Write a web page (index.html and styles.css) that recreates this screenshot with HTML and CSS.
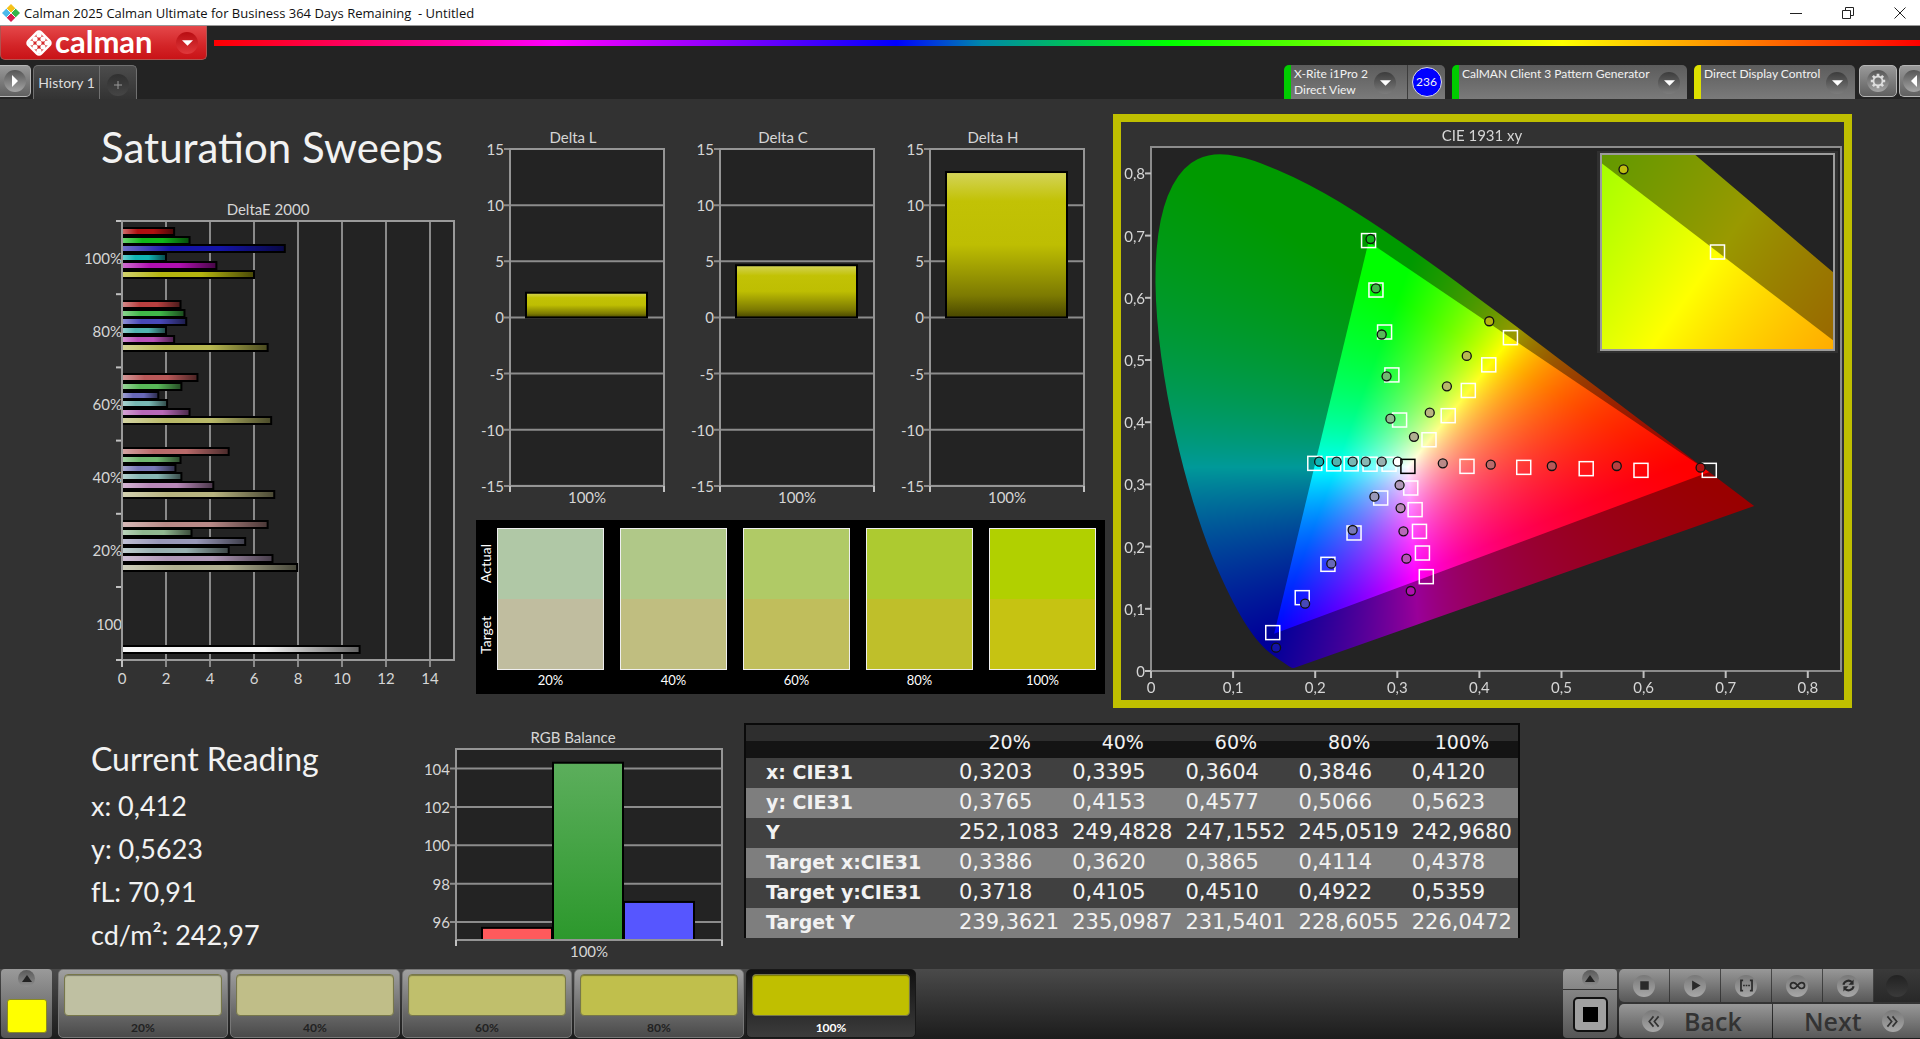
FILE: index.html
```html
<!DOCTYPE html>
<html lang="en">
<head>
<meta charset="utf-8">
<title>Calman 2025 - Untitled</title>
<link rel="stylesheet" href="styles.css">
</head>
<body>
<header class="titlebar">
  <svg class="app-icon" viewBox="0 0 20 20" aria-hidden="true">
    <path d="M10 0l5 5-5 5-5-5z" fill="#f5c21b"/>
    <path d="M5 5l5 5-5 5-5-5z" fill="#4db8ea"/>
    <path d="M15 5l5 5-5 5-5-5z" fill="#35b44a"/>
    <path d="M10 10l5 5-5 5-5-5z" fill="#d81e4e"/>
    <path d="M5 5l5 5M15 5L5 15M10 10l5 5" stroke="#fff" stroke-width="1"/>
  </svg>
  <span class="window-title">Calman 2025 Calman Ultimate for Business 364 Days Remaining&nbsp; - Untitled</span>
  <div class="window-buttons">
    <button type="button" aria-label="Minimize"><svg viewBox="0 0 14 14"><path d="M1 7.500h12"/></svg></button>
    <button type="button" aria-label="Restore"><svg viewBox="0 0 14 14"><path d="M1.500 4.500h8v8h-8zM4.500 4.500v-3h8v8h-3"/></svg></button>
    <button type="button" aria-label="Close"><svg viewBox="0 0 14 14"><path d="M1.500 1.500l11 11M12.500 1.500l-11 11"/></svg></button>
  </div>
</header>

<div class="brandbar">
  <button type="button" class="brand">
    <svg class="brand-icon" viewBox="0 0 28 28" aria-hidden="true">
      <rect x="5" y="5" width="18" height="18" rx="3" transform="rotate(45 14 14)" fill="none" stroke="#fff" stroke-width="2.500"/>
      <g fill="#fff">
        <circle cx="14" cy="6" r="2.600"/><circle cx="10" cy="10" r="2.600"/><circle cx="18" cy="10" r="2.600"/>
        <circle cx="6" cy="14" r="2.600"/><circle cx="14" cy="14" r="2.600"/><circle cx="22" cy="14" r="2.600"/>
        <circle cx="10" cy="18" r="2.600"/><circle cx="18" cy="18" r="2.600"/><circle cx="14" cy="22" r="2.600"/>
      </g>
    </svg>
    <span class="brand-name">calman</span>
    <span class="knob knob-red"><svg viewBox="0 0 12 6"><path d="M0 0h12l-6 6z" fill="#fff"/></svg></span>
  </button>
  <div class="rainbow"></div>
</div>

<nav class="toolbar">
  <button type="button" class="square-btn edge-left" aria-label="Expand panel"><span class="knob knob-gray"><svg class="tri-side" viewBox="0 0 6 12"><path d="M0 0v12l6-6z" fill="#fff"/></svg></span></button>
  <div class="tabs">
    <button type="button" class="tab">History 1</button>
    <button type="button" class="tab-add" aria-label="Add tab"><span class="knob knob-dark"><svg class="plus" viewBox="0 0 8 8"><path d="M4 0v8M0 4h8" stroke="#999"/></svg></span></button>
  </div>
  <div class="devices">
    <div class="device device-meter">
      <button type="button" class="device-main"><span>X-Rite i1Pro 2<br>Direct View</span><span class="knob knob-shade"><svg viewBox="0 0 12 6"><path d="M0 0h12l-6 6z" fill="#fff"/></svg></span></button>
      <div class="badge-cell"><span class="badge">236</span></div>
    </div>
    <div class="device device-source">
      <button type="button" class="device-main"><span>CalMAN Client 3 Pattern Generator</span><span class="knob knob-shade"><svg viewBox="0 0 12 6"><path d="M0 0h12l-6 6z" fill="#fff"/></svg></span></button>
    </div>
    <div class="device device-display">
      <button type="button" class="device-main"><span>Direct Display Control</span><span class="knob knob-shade"><svg viewBox="0 0 12 6"><path d="M0 0h12l-6 6z" fill="#fff"/></svg></span></button>
    </div>
    <button type="button" class="square-btn" aria-label="Settings"><span class="knob knob-gray"><svg class="gear" viewBox="0 0 20 20"><circle cx="10" cy="10" r="5" fill="none" stroke="#ddd" stroke-width="2"/><g stroke="#ddd" stroke-width="3"><path d="M10 2v3M10 15v3M2 10h3M15 10h3M4.300 4.300l2.200 2.200M13.500 13.500l2.200 2.200M4.300 15.700l2.200-2.200M13.500 6.500l2.200-2.200"/></g></svg></span></button>
    <button type="button" class="square-btn edge-right" aria-label="Collapse panel"><span class="knob knob-gray"><svg class="tri-side" viewBox="0 0 6 12"><path d="M6 0v12L0 6z" fill="#fff"/></svg></span></button>
  </div>
</nav>

<main class="workspace">
  <section class="row-top">
    <div class="col-sweeps">
      <h1>Saturation Sweeps</h1>
      <svg class="chart" id="deltae" viewBox="0 0 468 510" role="img" aria-label="DeltaE 2000"></svg>
    </div>
    <div class="col-delta">
      <div class="delta-charts">
        <svg class="chart" id="delta-l" viewBox="0 0 210 384" role="img" aria-label="Delta L"></svg>
        <svg class="chart" id="delta-c" viewBox="0 0 210 384" role="img" aria-label="Delta C"></svg>
        <svg class="chart" id="delta-h" viewBox="0 0 210 384" role="img" aria-label="Delta H"></svg>
      </div>
      <div class="swatches">
        <div class="swatch-side"><span>Actual</span><span>Target</span></div>
        <figure><div class="pair p20"></div><figcaption>20%</figcaption></figure>
        <figure><div class="pair p40"></div><figcaption>40%</figcaption></figure>
        <figure><div class="pair p60"></div><figcaption>60%</figcaption></figure>
        <figure><div class="pair p80"></div><figcaption>80%</figcaption></figure>
        <figure><div class="pair p100"></div><figcaption>100%</figcaption></figure>
      </div>
    </div>
    <div class="cie">
      <canvas id="gamut" width="723" height="578"></canvas>
      <svg class="chart" id="cie" viewBox="0 0 723 578" role="img" aria-label="CIE 1931 xy"></svg>
    </div>
  </section>

  <section class="row-bottom">
    <div class="reading">
      <h2>Current Reading</h2>
      <p>x: 0,412</p>
      <p>y: 0,5623</p>
      <p>fL: 70,91</p>
      <p>cd/m²: 242,97</p>
    </div>
    <svg class="chart" id="rgb" viewBox="0 0 324 240" role="img" aria-label="RGB Balance"></svg>
    <table class="data">
      <thead><tr><th></th><th>20%</th><th>40%</th><th>60%</th><th>80%</th><th>100%</th></tr></thead>
      <tbody>
        <tr><th>x: CIE31</th><td>0,3203</td><td>0,3395</td><td>0,3604</td><td>0,3846</td><td>0,4120</td></tr>
        <tr><th>y: CIE31</th><td>0,3765</td><td>0,4153</td><td>0,4577</td><td>0,5066</td><td>0,5623</td></tr>
        <tr><th>Y</th><td>252,1083</td><td>249,4828</td><td>247,1552</td><td>245,0519</td><td>242,9680</td></tr>
        <tr><th>Target x:CIE31</th><td>0,3386</td><td>0,3620</td><td>0,3865</td><td>0,4114</td><td>0,4378</td></tr>
        <tr><th>Target y:CIE31</th><td>0,3718</td><td>0,4105</td><td>0,4510</td><td>0,4922</td><td>0,5359</td></tr>
        <tr><th>Target Y</th><td>239,3621</td><td>235,0987</td><td>231,5401</td><td>228,6055</td><td>226,0472</td></tr>
      </tbody>
    </table>
  </section>
</main>

<footer class="footer">
  <button type="button" class="current" aria-label="Current pattern">
    <span class="knob-up"><svg viewBox="0 0 10 7"><path d="M5 0l5 7H0z" fill="#222"/></svg></span>
    <span class="current-color"></span>
  </button>
  <div class="patterns">
    <button type="button" class="pattern"><span class="chip c20"></span>20%</button>
    <button type="button" class="pattern"><span class="chip c40"></span>40%</button>
    <button type="button" class="pattern"><span class="chip c60"></span>60%</button>
    <button type="button" class="pattern"><span class="chip c80"></span>80%</button>
    <button type="button" class="pattern selected"><span class="chip c100"></span>100%</button>
  </div>
  <div class="stopper">
    <button type="button" class="stop-up" aria-label="More"><span class="knob-up"><svg viewBox="0 0 10 7"><path d="M5 0l5 7H0z" fill="#222"/></svg></span></button>
    <button type="button" class="stop-main" aria-label="Stop pattern"><span class="stop-frame"><span class="stop-core"></span></span></button>
  </div>
  <div class="transport">
    <div class="transport-row">
      <button type="button" aria-label="Stop"><span class="disc"><svg viewBox="0 0 20 20"><path d="M5 5h10v10H5z" fill="#2a2a2a"/></svg></span></button>
      <button type="button" aria-label="Play"><span class="disc"><svg viewBox="0 0 20 20"><path d="M6 4v12l10-6z" fill="#2a2a2a"/></svg></span></button>
      <button type="button" aria-label="Single step"><span class="disc"><svg viewBox="0 0 20 20"><path d="M6 4H3.500v12H6M14 4h2.500v12H14" fill="none" stroke="#2a2a2a" stroke-width="2"/><path d="M6 9h2v2H6zM9 9h2v2H9zM12 9h2v2h-2z" fill="#2a2a2a"/></svg></span></button>
      <button type="button" aria-label="Continuous"><span class="disc"><svg viewBox="0 0 20 20"><path d="M10 10c-2-3-3.500-3.500-4.800-3.500a3.500 3.500 0 0 0 0 7c1.300 0 2.800-.5 4.800-3.500s3.500-3.500 4.800-3.500a3.500 3.500 0 0 1 0 7c-1.300 0-2.800-.5-4.800-3.500z" fill="none" stroke="#2a2a2a" stroke-width="2"/></svg></span></button>
      <button type="button" aria-label="Refresh"><span class="disc"><svg viewBox="0 0 20 20"><path d="M4 9a6 6 0 0 1 10-3M16 11a6 6 0 0 1-10 3" fill="none" stroke="#2a2a2a" stroke-width="2.500"/><path d="M16 3v6h-6zM4 17v-6h6z" fill="#2a2a2a"/></svg></span></button>
      <div class="transport-rest"><span class="disc disc-dark"></span></div>
    </div>
    <div class="transport-row">
      <button type="button" class="nav-btn"><span class="disc"><svg viewBox="0 0 20 20"><path d="M10 4l-5 6 5 6M16 4l-5 6 5 6" fill="none" stroke="#333" stroke-width="2"/></svg></span>Back</button>
      <button type="button" class="nav-btn next">Next<span class="disc"><svg viewBox="0 0 20 20"><path d="M4 4l5 6-5 6M10 4l5 6-5 6" fill="none" stroke="#333" stroke-width="2"/></svg></span></button>
    </div>
  </div>
</footer>
<script src="charts.js"></script>
</body>
</html>
```
FILE: styles.css
```css
* { box-sizing: border-box; }
html { background: #232323; }
body {
  margin: 0;
  min-height: 100vh;
  display: flex;
  flex-direction: column;
  overflow-x: hidden;
  background: #232323;
  color: #f2f2f2;
  font-family: Lato, "Liberation Sans", sans-serif;
  font-size: 15px;
}
button {
  margin: 0;
  padding: 0;
  border: 0;
  background: none;
  color: inherit;
  font: inherit;
  cursor: pointer;
}
svg { display: block; }

/* window title */
.titlebar {
  display: flex;
  align-items: center;
  height: 26px;
  padding-left: 2px;
  background: #fff;
  border-bottom: 1px solid #999;
  color: #111;
}
.app-icon { width: 18px; height: 18px; margin-right: 4px; }
.window-title { font: 13px/24px "Open Sans", "Noto Sans", sans-serif; white-space: nowrap; }
.window-buttons { display: flex; gap: 12px; margin-left: auto; }
.window-buttons button { display: flex; justify-content: center; width: 40px; }
.window-buttons svg { width: 14px; height: 14px; fill: none; stroke: #222; stroke-width: 1; }

/* brand */
.brandbar { display: flex; align-items: center; gap: 7px; height: 34px; }
.brand {
  display: flex;
  align-items: center;
  width: 207px;
  height: 34px;
  padding: 0 8px 0 24px;
  border: 1px solid #b0524f;
  border-top: 0;
  border-radius: 0 0 5px 5px;
  background: linear-gradient(#e5484a, #d32427 60%, #c91317);
  color: #fff;
}
.brand-icon { width: 28px; height: 28px; margin-right: 2px; }
.brand-name { font-size: 31px; font-weight: 700; line-height: 30px; height: 34px; }
.knob {
  display: flex;
  flex: none;
  align-items: center;
  justify-content: center;
  width: 22px;
  height: 22px;
  border-radius: 50%;
}
.knob svg { width: 11px; height: 6px; }
.knob .tri-side { width: 6px; height: 12px; }
.knob .plus { width: 8px; height: 8px; }
.knob .gear { width: 18px; height: 18px; }
.knob-red { margin-left: auto; background: linear-gradient(#b80d12, #e0383b); }
.knob-gray { background: linear-gradient(#555, #a5a5a5); }
.knob-dark { background: linear-gradient(#303030, #454545); }
.knob-shade { background: linear-gradient(#3c3c3c, #7c7c7c); }
.rainbow {
  flex: 1;
  height: 6px;
  background: linear-gradient(90deg, #f00 0%, #f0a 14%, #f0f 20%, #80f 30%, #00f 40%, #08a 45%, #0f0 56%, #8f0 68%, #ff0 79%, #f80 89%, #f00 100%);
}

/* toolbar */
.toolbar { display: flex; align-items: flex-start; height: 39px; padding-top: 5px; }
.square-btn {
  display: flex;
  flex: none;
  align-items: center;
  justify-content: center;
  width: 38px;
  height: 32px;
  border: 1px solid #b5b5b5;
  border-radius: 5px;
  background: linear-gradient(#999, #606060);
}
.edge-left { width: 31px; border-left: 0; border-radius: 0 5px 5px 0; }
.edge-right { width: 21px; border-right: 0; border-radius: 5px 0 0 5px; justify-content: flex-start; padding-left: 3px; overflow: hidden; }
.tabs {
  display: flex;
  height: 34px;
  margin-left: 2px;
  border: 1px solid #707070;
  border-bottom: 0;
  border-radius: 5px 5px 0 0;
  background: linear-gradient(#4c4c4c, #333);
  color: #ddd;
}
.tab { width: 65px; white-space: nowrap; font-size: 14px; }
.tab-add { display: flex; align-items: center; justify-content: center; width: 37px; padding-top: 4px; border-left: 1px solid #707070; }
.devices { display: flex; gap: 2px; margin-left: auto; }
.device {
  display: flex;
  height: 34px;
  margin-right: 5px;
  border-left: 7px solid #0c0;
  border-radius: 5px 5px 0 0;
  background: linear-gradient(#5c5c5c, #7a7a7a);
  font-size: 12px;
  line-height: 16px;
}
.device-meter { width: 161px; }
.device-source { width: 235px; }
.device-display { width: 161px; margin-right: 2px; border-left-color: #dde000; }
.device-main { display: flex; flex: 1; justify-content: space-between; align-items: flex-start; padding: 1px 7px 0 3px; text-align: left; white-space: nowrap; }
.device-main .knob { margin-top: 6px; }
.device-meter .device-main { padding-right: 11px; }
.badge-cell { display: flex; align-items: center; justify-content: center; width: 38px; border-left: 1px solid #3c3c3c; }
.badge {
  display: flex;
  align-items: center;
  justify-content: center;
  width: 30px;
  height: 30px;
  border: 1px solid #ddd;
  border-radius: 50%;
  background: #00f;
}

/* workspace */
.workspace { flex: 1; background: #323232; }
.row-top { display: grid; grid-template-columns: 468fr 645fr 739fr 68fr; align-items: start; }
.chart { width: 100%; height: auto; }
.chart text { fill: #d6d6d6; font-family: Lato, "Liberation Sans", sans-serif; font-size: 15px; }
h1 {
  margin: 0;
  padding: 18px 0 0 101px;
  height: 91px;
  font-size: 42px;
  font-weight: 400;
  line-height: 60px;
  white-space: nowrap;
}
.col-delta { padding: 25px 8px 0 0; }
.delta-charts { display: grid; grid-template-columns: repeat(3, 1fr); margin-right: 7px; }
.swatches {
  display: grid;
  grid-template-columns: 5px repeat(5, 1fr);
  column-gap: 16px;
  margin: 12px 0 0 8px;
  padding: 8px 9px 4px 0;
  background: #000;
}
.swatch-side {
  display: flex;
  flex-direction: row-reverse;
  justify-content: space-around;
  align-items: center;
  width: 20px;
  height: 142px;
  writing-mode: vertical-rl;
  transform: rotate(180deg);
  font-size: 14px;
  line-height: 20px;
  color: #fff;
}
.swatches figure { margin: 0; }
.pair { height: 142px; border: 1px solid #eee; }
.swatches figcaption { padding-top: 1px; font-size: 13px; line-height: 19px; text-align: center; color: #fff; }
.p20 { background: linear-gradient(#b0c8a6 50%, #c0bd9f 50%); }
.p40 { background: linear-gradient(#b0c888 50%, #c0be80 50%); }
.p60 { background: linear-gradient(#b0ca66 50%, #c0be5c 50%); }
.p80 { background: linear-gradient(#adca30 50%, #bfbf2a 50%); }
.p100 { background: linear-gradient(#b1d000 50%, #c6c312 50%); }
.cie { display: grid; margin-top: 15px; border: 8px solid #bfbf00; }
.cie > * { grid-area: 1 / 1; width: 100%; height: auto; }

.row-bottom { display: grid; grid-template-columns: 420fr 324fr 776fr 400fr; align-items: start; padding-top: 15px; }
.reading { padding: 11px 0 0 91px; }
.reading h2 { margin: 0; font-size: 32px; font-weight: 400; line-height: 50px; white-space: nowrap; }
.reading p { margin: 0; font-size: 27px; line-height: 43px; white-space: nowrap; }
.data {
  width: 100%;
  border-collapse: collapse;
  table-layout: fixed;
  border: 2px solid #0a0a0a;
  border-bottom: 0;
  font-family: "DejaVu Sans", sans-serif;
  font-size: 20px;
  line-height: 28px;
}
.data th, .data td { padding: 0 0 2px 6px; text-align: left; white-space: nowrap; }
.data td { font-size: 21px; }
.data th:first-child { width: 208px; padding-left: 20px; font-size: 19px; }
.data thead th { height: 34px; padding: 0; text-align: center; font-size: 19px; font-weight: 400; }
.data thead tr { background: linear-gradient(#2e2e2e 50%, #141414 50%); }
.data tbody tr { background: #404040; height: 30px; }
.data tbody tr:nth-child(even) { background: #7e7e7e; }

/* footer */
.footer { display: flex; height: 70px; padding: 0 0 1px 1px; background: linear-gradient(#4a4a4a, #1c1c1c); }
.current {
  display: flex;
  flex-direction: column;
  align-items: center;
  width: 51px;
  padding-top: 1px;
  border-radius: 4px;
  background: linear-gradient(#9a9a9a, #555);
}
.knob-up {
  display: flex;
  align-items: center;
  justify-content: center;
  width: 17px;
  height: 17px;
  border-radius: 50%;
  background: linear-gradient(#5a5a5a, #8e8e8e);
}
.knob-up svg { width: 10px; height: 7px; }
.current-color { width: 40px; height: 34px; margin-top: 12px; border: 1px solid #8a8a20; border-radius: 3px; background: #ff0; }
.patterns { display: flex; gap: 2px; margin-left: 6px; }
.pattern {
  width: 170px;
  padding: 4px 5px 0;
  border: 1px solid #777;
  border-radius: 5px;
  background: linear-gradient(#a0a0a0, #4a4a4a);
  color: #222;
  font-size: 12px;
  font-weight: 700;
  line-height: 24px;
}
.pattern.selected { border-color: #181818; background: linear-gradient(#111, #3c3c3c); color: #fff; }
.chip { display: block; height: 42px; border: 1px solid #77774a; border-radius: 4px; box-shadow: inset 0 1px 1px rgba(0, 0, 0, .35); }
.c20 { background: #bfc0a2; }
.c40 { background: #c0be88; }
.c60 { background: #c0bf6c; }
.c80 { background: #c0bf4c; }
.c100 { background: #c0bf00; }
.stopper { display: flex; flex-direction: column; width: 54px; margin-left: auto; border-radius: 4px; overflow: hidden; background: linear-gradient(#9a9a9a, #555); }
.stop-up { display: flex; justify-content: center; height: 21px; padding-top: 1px; border-bottom: 1px solid #333; }
.stop-main { display: flex; flex: 1; align-items: center; justify-content: center; }
.stop-frame { display: flex; align-items: center; justify-content: center; width: 35px; height: 35px; border: 2px solid #111; border-radius: 5px; background: #a0a0a0; }
.stop-core { width: 15px; height: 15px; background: #000; }
.transport { width: 301px; margin-left: 2px; display: grid; grid-template-rows: 33px 1fr; row-gap: 2px; }
.transport-row { display: flex; gap: 1px; }
.transport-row button { display: flex; align-items: center; justify-content: center; width: 50px; background: linear-gradient(#989898, #585858); }
.transport-row button:first-child { border-radius: 5px 0 0 5px; }
.transport-rest { display: flex; flex: 1; align-items: center; justify-content: center; background: linear-gradient(#3a3a3a, #282828); }
.disc { display: flex; flex: none; align-items: center; justify-content: center; width: 22px; height: 22px; border-radius: 50%; background: linear-gradient(#787878, #a8a8a8); }
.disc svg { width: 17px; height: 17px; }
.disc-dark { background: linear-gradient(#222, #3a3a3a); }
.transport-row .nav-btn { width: 153px; gap: 20px; padding-left: 23px; justify-content: flex-start; color: #333; font: 600 25px/34px "Open Sans", sans-serif; }
.transport-row .next { width: 147px; padding-left: 31px; }
```
FILE: charts.js
```js
const NS = 'http://www.w3.org/2000/svg';

function add(parent, name, attrs, text) {
  const el = document.createElementNS(NS, name);
  for (const key in attrs) el.setAttribute(key, attrs[key]);
  if (text !== undefined) el.textContent = text;
  parent.appendChild(el);
  return el;
}
const line = (p, x1, y1, x2, y2, color = '#8a8a8a') =>
  add(p, 'line', { x1, y1, x2, y2, stroke: color, 'stroke-width': 2 });
const label = (p, x, y, text, anchor = 'middle') =>
  add(p, 'text', { x, y, 'text-anchor': anchor }, text);

function gradient(svg, id, horizontal, stops) {
  const g = add(svg, 'linearGradient', horizontal ? { id } : { id, x1: 0, y1: 0, x2: 0, y2: 1 });
  stops.forEach(([offset, color]) => add(g, 'stop', { offset, 'stop-color': color }));
}

/* series colours, from 20% to 100% saturation */
const COLORS = {
  red: ['#b98a88', '#b96a6a', '#b95858', '#b84040', '#b01010'],
  green: ['#90b890', '#70b870', '#58b858', '#40b848', '#10b818'],
  blue: ['#9898b8', '#7878b8', '#6868b8', '#4848b8', '#1414a8'],
  cyan: ['#98b0b0', '#88b8b4', '#78b8b4', '#50b4b0', '#10b4b4'],
  magenta: ['#b098b8', '#b888b8', '#b868b8', '#b850b8', '#b010b0'],
  yellow: ['#b0b090', '#b8b480', '#b8b868', '#b8b850', '#b4b410']
};
const ORDER = ['red', 'green', 'blue', 'cyan', 'magenta', 'yellow'];

/* DeltaE 2000 */
(function () {
  const svg = document.getElementById('deltae');
  const left = 122, right = 454, top = 31, bottom = 470, unit = 22, group = 73.2;
  const groups = [
    ['100%', 4, [2.37, 3.07, 7.4, 2, 4.29, 6]],
    ['80%', 3, [2.66, 2.84, 2.92, 2, 2.37, 6.62]],
    ['60%', 2, [3.43, 2.7, 1.65, 2.05, 3.07, 6.78]],
    ['40%', 1, [4.85, 2.66, 2.43, 2.7, 4.15, 6.92]],
    ['20%', 0, [6.62, 3.16, 5.6, 4.85, 6.84, 7.96]],
    ['100', 0, []]
  ];
  gradient(svg, 'sheen', true, [[0, 'rgba(255,255,255,.4)'], [0.3, 'rgba(255,255,255,0)'], [0.6, 'rgba(0,0,0,0)'], [1, 'rgba(0,0,0,.6)']]);
  label(svg, 268, 25, 'DeltaE 2000');
  add(svg, 'rect', { x: left, y: top, width: right - left, height: bottom - top, fill: '#232323' });
  for (let v = 2; v < 15; v += 2) line(svg, left + v * unit, top, left + v * unit, bottom + 7);
  const bar = (slot, y0, value, color) => {
    const box = { x: left, y: Math.round(y0 + 7 + slot * 8.6), width: value * unit, height: 7 };
    add(svg, 'rect', { ...box, fill: color });
    add(svg, 'rect', { ...box, fill: 'url(#sheen)', stroke: '#000', 'stroke-width': 2 });
  };
  groups.forEach(([name, shade, values], i) => {
    const y0 = top + i * group;
    line(svg, left - 6, y0, left, y0, '#c0c0c0');
    label(svg, left, y0 + group / 2 + 6, name, 'end');
    values.forEach((v, k) => bar(k, y0, v, COLORS[ORDER[k]][shade]));
  });
  bar(6, top + 5 * group, 10.8, '#f4f4f4');
  add(svg, 'rect', { x: left, y: top, width: right - left, height: bottom - top, fill: 'none', stroke: '#9a9a9a', 'stroke-width': 2 });
  line(svg, left - 6, bottom, left, bottom, '#c0c0c0');
  line(svg, left, bottom, left, bottom + 7, '#c0c0c0');
  for (let v = 0; v < 15; v += 2) label(svg, left + v * unit, bottom + 24, v);
})();

/* Delta L, C and H */
[['delta-l', 'Delta L', 2.2], ['delta-c', 'Delta C', 4.65], ['delta-h', 'Delta H', 12.95]].forEach(([id, title, value]) => {
  const svg = document.getElementById(id);
  const left = 42, right = 196, top = 25, unit = 11.23, zero = top + 15 * unit, bottom = top + 30 * unit;
  gradient(svg, id + '-fill', false, [[0, '#d4d45a'], [0.2, '#c2c205'], [0.5, '#bebe02'], [0.85, '#7c7a02'], [1, '#484600']]);
  label(svg, 105, 19, title);
  add(svg, 'rect', { x: left, y: top, width: right - left, height: bottom - top, fill: '#232323' });
  for (let v = 15; v >= -15; v -= 5) {
    const y = zero - v * unit;
    line(svg, left - 6, y, right, y, '#8c8c8c');
    label(svg, left - 6, y + 6, v, 'end');
  }
  add(svg, 'rect', { x: left, y: top, width: right - left, height: bottom - top, fill: 'none', stroke: '#959595', 'stroke-width': 2 });
  line(svg, left, bottom, left, bottom + 6, '#c0c0c0');
  line(svg, right, bottom, right, bottom + 6, '#c0c0c0');
  add(svg, 'rect', { x: 58, y: zero - value * unit, width: 121, height: value * unit, fill: `url(#${id}-fill)`, stroke: '#000', 'stroke-width': 2 });
  label(svg, 119, bottom + 17, '100%');
});

/* RGB balance */
(function () {
  const svg = document.getElementById('rgb');
  const left = 36, right = 302, top = 26, bottom = 217, unit = 19.2;
  const yOf = v => 45.5 + (104 - v) * unit;
  gradient(svg, 'rgb-green', false, [[0, '#5cae5c'], [1, '#2c982c']]);
  label(svg, 153, 20, 'RGB Balance');
  add(svg, 'rect', { x: left, y: top, width: right - left, height: bottom - top, fill: '#232323' });
  for (let v = 104; v >= 96; v -= 2) {
    line(svg, left - 6, yOf(v), right, yOf(v), '#8c8c8c');
    label(svg, left - 6, yOf(v) + 6, v, 'end');
  }
  [[62, 95.7, '#ff5a5c'], [133, 104.3, 'url(#rgb-green)'], [204, 97.05, '#5656ff']].forEach(([x, v, fill]) =>
    add(svg, 'rect', { x, y: yOf(v), width: 70, height: bottom - yOf(v), fill, stroke: '#000', 'stroke-width': 2 }));
  add(svg, 'rect', { x: left, y: top, width: right - left, height: bottom - top, fill: 'none', stroke: '#959595', 'stroke-width': 2 });
  line(svg, left, bottom, left, bottom + 6, '#c0c0c0');
  line(svg, right, bottom, right, bottom + 6, '#c0c0c0');
  label(svg, 169, bottom + 17, '100%');
})();

/* CIE 1931 xy */
(function () {
  const svg = document.getElementById('cie');
  const ctx = document.getElementById('gamut').getContext('2d');
  const plot = { x: 30, y: 25, w: 690, h: 524 };
  const inset = { x: 480, y: 32, w: 233, h: 196 };
  const toPlot = { x: v => 30 + v * 821, y: v => 549 - v * 622, ix: px => (px - 30) / 821, iy: py => (549 - py) / 622 };
  const cx = inset.x + inset.w / 2, cy = inset.y + inset.h / 2;
  const toInset = {
    x: v => cx + (v - 0.4378) * 3643, y: v => cy - (v - 0.5359) * 3130,
    ix: px => (px - cx) / 3643 + 0.4378, iy: py => (cy - py) / 3130 + 0.5359
  };
  const locus = [[.1741, .005], [.1733, .0048], [.1714, .0051], [.1689, .0069], [.1644, .0109], [.1566, .0177], [.144, .0297],
    [.1355, .0399], [.1241, .0578], [.1096, .0868], [.0913, .1327], [.0687, .2007], [.0454, .295], [.0235, .4127], [.0082, .5384],
    [.0039, .6548], [.0139, .7502], [.0389, .812], [.0743, .8338], [.1142, .8262], [.1547, .8059], [.1929, .7816], [.2296, .7543],
    [.2658, .7243], [.3016, .6923], [.3373, .6589], [.3731, .6245], [.4087, .5896], [.4441, .5547], [.4788, .5202], [.5125, .4866],
    [.5448, .4544], [.5752, .4242], [.6029, .3965], [.627, .3725], [.6658, .334], [.6915, .3083], [.719, .2809], [.7347, .2653]];
  const triangle = [[.68, .32], [.265, .69], [.15, .06]];

  function colorAt(x, y) {
    const X = x / y, Z = (1 - x - y) / y;
    const rgb = [
      3.2406 * X - 1.5372 - 0.4986 * Z,
      -0.9689 * X + 1.8758 + 0.0415 * Z,
      0.0557 * X - 0.204 + 1.057 * Z
    ].map(c => Math.max(c, 0));
    const max = Math.max(...rgb);
    return rgb.map(c => 255 * c / max);
  }
  function shade(area, map, level) {
    const layer = document.createElement('canvas');
    layer.width = area.w;
    layer.height = area.h;
    const lctx = layer.getContext('2d');
    const image = lctx.createImageData(area.w, area.h);
    for (let j = 0; j < area.h; j++) {
      for (let i = 0; i < area.w; i++) {
        const rgb = colorAt(map.ix(area.x + i), Math.max(map.iy(area.y + j), 0.001));
        const k = 4 * (j * area.w + i);
        for (let c = 0; c < 3; c++) image.data[k + c] = rgb[c] * level;
        image.data[k + 3] = 255;
      }
    }
    lctx.putImageData(image, 0, 0);
    return layer;
  }
  function outline(points, map, smooth) {
    ctx.beginPath();
    const p = points.map(([x, y]) => [map.x(x), map.y(y)]);
    ctx.moveTo(...p[0]);
    for (let i = 1; i < p.length - 1; i++) {
      if (smooth) ctx.quadraticCurveTo(...p[i], (p[i][0] + p[i + 1][0]) / 2, (p[i][1] + p[i + 1][1]) / 2);
      else ctx.lineTo(...p[i]);
    }
    ctx.lineTo(...p[p.length - 1]);
    ctx.closePath();
  }
  function paint(area, map) {
    ctx.save();
    ctx.beginPath();
    ctx.rect(area.x, area.y, area.w, area.h);
    ctx.clip();
    ctx.fillStyle = '#232323';
    ctx.fillRect(area.x, area.y, area.w, area.h);
    outline(locus, map, true);
    ctx.clip();
    ctx.drawImage(shade(area, map, 0.6), area.x, area.y);
    outline(triangle, map, false);
    ctx.clip();
    ctx.drawImage(shade(area, map, 1), area.x, area.y);
    ctx.restore();
  }
  paint(plot, toPlot);
  ctx.fillStyle = '#303030';
  ctx.fillRect(inset.x - 4, inset.y - 3, inset.w + 8, inset.h + 6);
  paint(inset, toInset);

  add(svg, 'rect', { x: plot.x, y: plot.y, width: plot.w, height: plot.h, fill: 'none', stroke: '#8c8c8c', 'stroke-width': 2 });
  add(svg, 'rect', { x: inset.x, y: inset.y, width: inset.w, height: inset.h, fill: 'none', stroke: '#9c9c9c', 'stroke-width': 2 });
  label(svg, 361, 19, 'CIE 1931 xy');
  for (let i = 0; i <= 8; i++) {
    const text = i ? '0,' + i : '0';
    const x = toPlot.x(i / 10), y = toPlot.y(i / 10);
    line(svg, x, 549, x, 556, '#c0c0c0');
    line(svg, 24, y, 30, y, '#c0c0c0');
    label(svg, x, 571, text);
    label(svg, 24, y + 6, text, 'end');
  }

  const targets = [
    [.265, .692], [.274, .6125], [.2845, .545], [.2934, .476], [.3028, .4035],
    [.1995, .3338], [.2225, .333], [.2438, .333], [.2668, .3325], [.29, .3325],
    [.3849, .329], [.454, .3274], [.5301, .3253], [.5968, .3226], [.68, .3226],
    [.2798, .2781], [.2473, .2219], [.2155, .1715], [.1842, .1179], [.1483, .0617],
    [.3164, .2942], [.3217, .2594], [.327, .2245], [.3306, .1897], [.3353, .1517],
    [.3386, .3718], [.362, .4105], [.3865, .451], [.4114, .4922], [.4378, .5359]
  ];
  const actual = {
    green: [[.2916, .4057], [.2869, .4737], [.281, .541], [.2739, .615], [.2674, .6945]],
    cyan: [[.281, .3365], [.2615, .3365], [.2456, .3365], [.2261, .3365], [.2048, .3365]],
    red: [[.3554, .3339], [.4138, .3317], [.4882, .3296], [.5673, .3296], [.6694, .3269]],
    blue: [[.2721, .2803], [.2456, .2267], [.2196, .1726], [.1877, .1083], [.1523, .0375]],
    magenta: [[.3028, .299], [.304, .262], [.3075, .2245], [.3111, .1806], [.3164, .1286]],
    yellow: [[.3203, .3765], [.3395, .4153], [.3604, .4577], [.3846, .5066], [.412, .5623]]
  };
  const square = (map, [x, y], stroke = '#fff') =>
    add(svg, 'rect', { x: map.x(x) - 7, y: map.y(y) - 7, width: 14, height: 14, fill: 'none', stroke, 'stroke-width': 1.5 });
  const dot = (map, [x, y], fill) =>
    add(svg, 'circle', { cx: map.x(x), cy: map.y(y), r: 4.5, fill, stroke: '#111', 'stroke-width': 1.3 });
  targets.forEach(p => square(toPlot, p));
  for (const name in actual) actual[name].forEach((p, i) => dot(toPlot, p, COLORS[name][i]));
  dot(toPlot, [.3005, .3365], '#fff');
  square(toPlot, [.3129, .329], '#000');
  square(toInset, [.4378, .5359]);
  dot(toInset, [.412, .5623], '#bfbf10');
})();
```
